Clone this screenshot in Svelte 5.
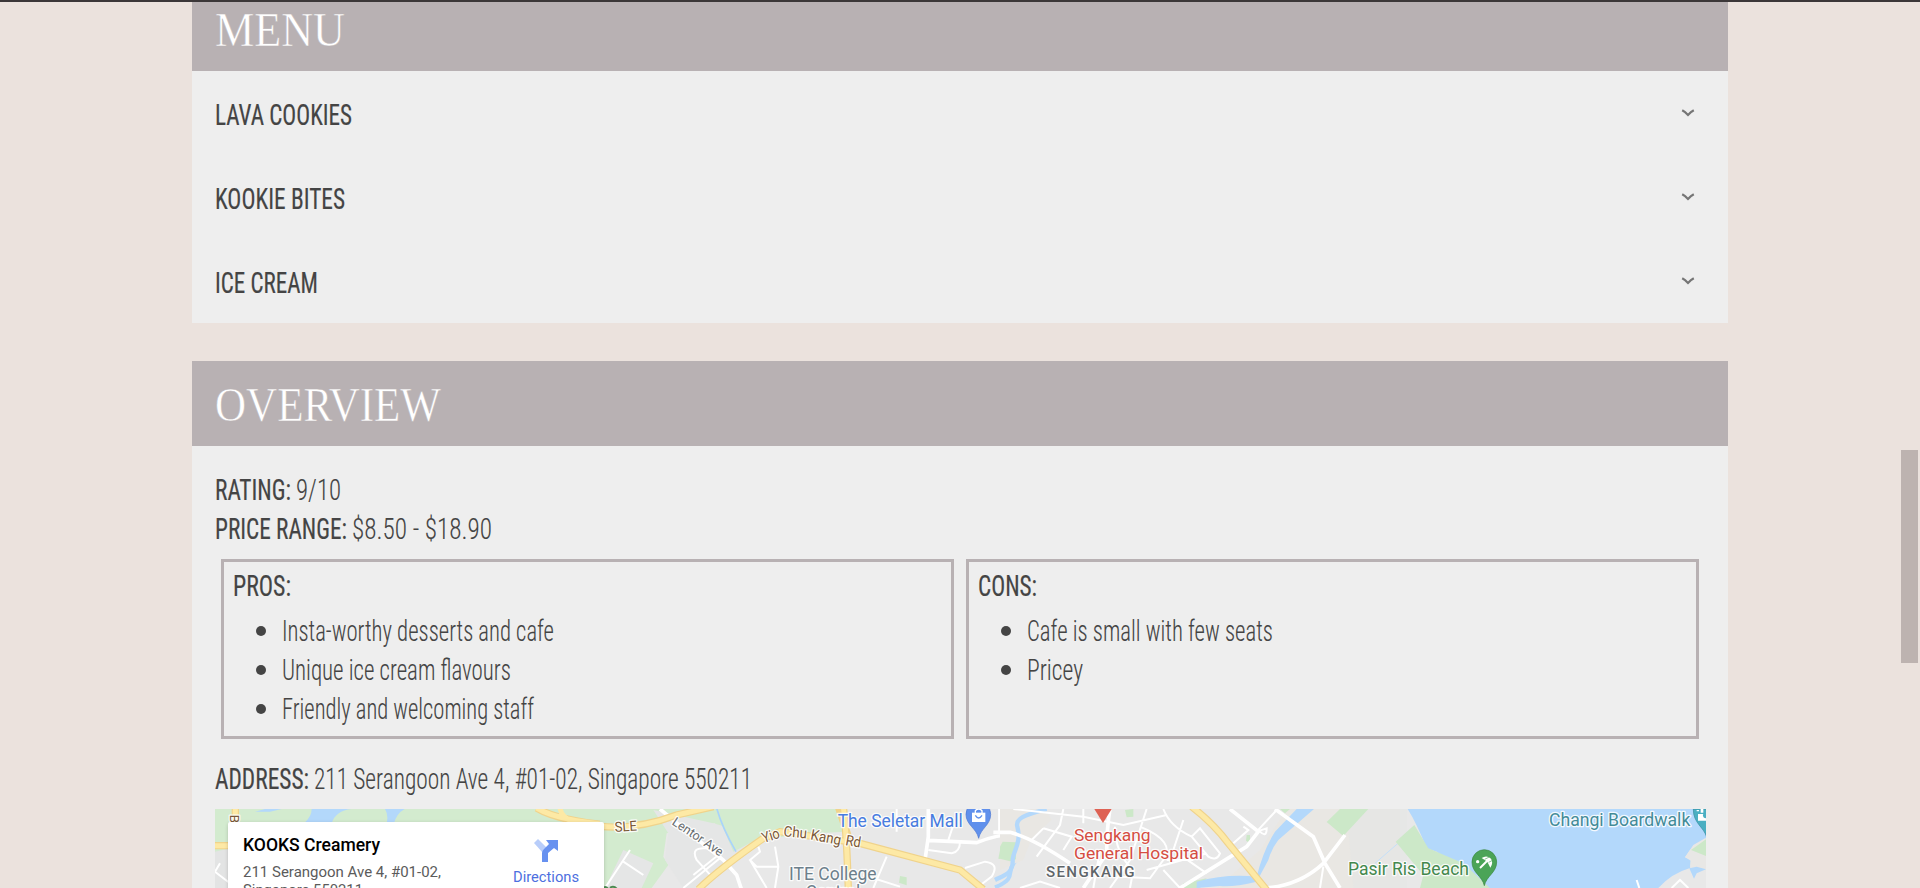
<script>
  const menu = [
    { name: 'LAVA COOKIES', width: 137 },
    { name: 'KOOKIE BITES', width: 130 },
    { name: 'ICE CREAM', width: 103 }
  ];
  const facts = [
    { label: 'RATING:', labelWidth: 76, value: '9/10', valueWidth: 45 },
    { label: 'PRICE RANGE:', labelWidth: 132, value: '$8.50 - $18.90', valueWidth: 140 }
  ];
  const boxes = [
    {
      title: 'PROS:',
      width: 58,
      items: [
        { text: 'Insta-worthy desserts and cafe', width: 272 },
        { text: 'Unique ice cream flavours', width: 229 },
        { text: 'Friendly and welcoming staff', width: 252 }
      ]
    },
    {
      title: 'CONS:',
      width: 59,
      items: [
        { text: 'Cafe is small with few seats', width: 246 },
        { text: 'Pricey', width: 56 }
      ]
    }
  ];
</script>

{#snippet line(text, width, kind)}
  <svg class="line {kind}" {width} height="39">
    <text x="0" y="28.5" textLength={width} lengthAdjust="spacingAndGlyphs">{text}</text>
  </svg>
{/snippet}

{#snippet heading(text, width)}
  <svg class="heading" {width} height="50">
    <text x="0" y="40" textLength={width} lengthAdjust="spacingAndGlyphs">{text}</text>
  </svg>
{/snippet}

<div class="page">
  <main>
    <section>
      <header class="first">{@render heading('MENU', 130)}</header>
      {#each menu as item}
        <div class="row">
          {@render line(item.name, item.width, 'strong')}
          <svg class="chevron" width="14" height="8" viewBox="0 0 14 8">
            <path d="M1.2 1.3Q4 2.8 7 5.9Q10 2.8 12.8 1.3" />
          </svg>
        </div>
      {/each}
    </section>

    <section class="overview">
      <header>{@render heading('OVERVIEW', 226)}</header>
      <div class="content">
        {#each facts as f}
          <div class="fact">
            {@render line(f.label, f.labelWidth, 'strong')}
            {@render line(f.value, f.valueWidth, 'light')}
          </div>
        {/each}
        <div class="boxes">
          {#each boxes as box}
            <div class="box">
              {@render line(box.title, box.width, 'strong')}
              <ul>
                {#each box.items as item}
                  <li><i></i>{@render line(item.text, item.width, 'light')}</li>
                {/each}
              </ul>
            </div>
          {/each}
        </div>
        <div class="fact">
          {@render line('ADDRESS:', 94, 'strong')}
          {@render line('211 Serangoon Ave 4, #01-02, Singapore 550211', 438, 'light')}
        </div>

        <div class="map">
          <svg width="1491" height="79" viewBox="215 809 1491 79">
            <rect x="215" y="809" width="1491" height="79" fill="#e8e8e8" />

            <g transform="translate(200 800) scale(.33333)">
              <path fill="#d3ebcf" d="M45 27H1300V280H45Z" />
              <path fill="#e3e4e4" d="M45 155L90 145V264H45ZM1215 264L1260 190V264Z" />
              <path fill="#b3d8fb" d="M165 35L195 27H245L210 35ZM335 27H400Q480 20 490 27Q410 20 395 70H312Q335 50 335 27ZM555 27H614Q590 40 582 70H560Q566 45 555 27Z" />
              <path class="edge" d="M106 27V66M45 137H90M1010 24Q1080 66 1260 78" />
              <path class="road" d="M106 27V66M45 137H90M1080 20Q1080 50 1120 66M1010 24Q1080 66 1280 78" />
              <path class="street" d="M45 215L90 250M60 190L45 215" />
              <text x="0" y="0" font-size="40" class="brown" transform="translate(90 44) rotate(90)">B</text>
            </g>

            <g transform="translate(600 800) scale(.33333)">
              <path fill="#d3ebcf" d="M0 27H735V90H690L500 118L480 110L400 155L345 70L200 100L190 170L205 195L155 264H0Z" />
              <path fill="#e5e6e6" d="M160 30L340 70L480 110L375 200L300 264H250L195 180L205 100ZM70 150L160 190L125 264H15Z" />
              <path fill="#d3ebcf" d="M345 27H720L735 95L490 108L400 155Z" />
              <path fill="#cce8c8" d="M1205 125L1260 127V160L1250 184L1195 176ZM900 228L920 232V256L897 248Z" />
              <path fill="none" stroke="#a9d3fb" stroke-width="5" d="M350 24Q365 80 408 155" />
              <path fill="none" stroke="#b3d8fb" stroke-width="12" d="M1280 75C1215 90 1290 145 1250 180C1210 215 1260 230 1185 262" />
              <path class="street" d="M15 264L90 150M70 185L130 225M250 264L365 170M280 225L355 165L320 145Q270 140 290 180L340 235M450 180L500 264M535 200L470 200L450 180L480 155L475 140M525 140L535 200L525 264M890 27V95M820 264L860 170M985 150L1055 160Q1080 155 1080 125M1045 120L1060 75M1095 204L1155 185Q1200 190 1175 230L1130 264M790 225L900 260" />
              <path class="street wide" d="M180 27L225 65L370 180L410 225L425 270M985 27V110L975 180M985 121L1130 128Q1210 95 1280 105M1200 27V95" />
              <path class="edge" d="M0 79Q110 90 230 45L340 20M295 268Q360 205 490 115L540 95L780 130L1080 210L1150 268M730 20Q740 100 745 268M715 20L745 110" />
              <path class="road" d="M0 79Q110 90 230 45L340 20M295 268Q360 205 490 115L540 95L780 130L1080 210L1150 268M730 20Q740 100 745 268" />
              <text x="45" y="96" font-size="42" textLength="67" lengthAdjust="spacingAndGlyphs" class="brown" transform="rotate(-4 45 96)">SLE</text>
              <text x="214" y="72" font-size="38" textLength="175" lengthAdjust="spacingAndGlyphs" transform="rotate(34 214 72)" fill="#666b6e">Lentor Ave</text>
              <g class="brown" font-size="44">
                <text x="491" y="129" textLength="54" lengthAdjust="spacingAndGlyphs" transform="rotate(-18 491 129)">Yio</text>
                <text x="550" y="109" textLength="70" lengthAdjust="spacingAndGlyphs" transform="rotate(5 550 109)">Chu</text>
                <text x="630" y="118" textLength="92" lengthAdjust="spacingAndGlyphs" transform="rotate(11 630 118)">Kang</text>
                <text x="735" y="135" textLength="46" lengthAdjust="spacingAndGlyphs" transform="rotate(10 735 135)">Rd</text>
              </g>
              <g fill="#6c7f8b" font-size="54">
                <text x="567" y="241" textLength="263" lengthAdjust="spacingAndGlyphs">ITE College</text>
                <text x="617" y="295" textLength="164" lengthAdjust="spacingAndGlyphs">Central</text>
              </g>
              <text x="713" y="82" font-size="54" textLength="375" lengthAdjust="spacingAndGlyphs" fill="#477ce0">The Seletar Mall</text>
              <path fill="#6090ec" stroke="#4876d2" stroke-width="2" d="M1136 115C1130 85 1098 75 1098 43A37 37 0 0 1 1172 43C1172 75 1142 85 1136 115Z" />
              <path fill="#fff" d="M1116 38H1156V66H1116Z" />
              <path fill="none" stroke="#fff" stroke-width="4" d="M1126 40V32Q1136 22 1146 32V40" />
              <path fill="none" stroke="#6090ec" stroke-width="4" d="M1126 46Q1136 62 1146 46" />
              <path fill="none" stroke="#4c8a50" stroke-width="6" d="M8 266Q15 256 24 266M32 270V262Q42 257 50 266" />
            </g>

            <g transform="translate(1000 800) scale(.33333)">
              <path fill="#e9e7e3" d="M0 27H135L155 60L95 115L70 180L0 210ZM650 264L780 150L860 27H1200V264Z" />
              <path fill="#e5e6e5" d="M1040 27H1220V264H1060Z" opacity=".6" />
              <path fill="#cce8c8" d="M8 125L48 127V178L30 184L0 176V140ZM1020 27H1105L1030 108L980 66ZM375 30L400 27V50L380 52ZM550 250L620 235L600 264H545ZM740 105H750V130L738 122ZM840 27H870L855 40Z" />
              <path fill="none" stroke="#b3d8fb" stroke-width="13" d="M140 27C75 45 45 55 52 80C65 130 40 150 38 180C40 220 15 225 -15 240" />
              <path fill="#b3d8fb" d="M890 27H942L835 120Q815 145 805 180L770 245Q700 262 660 258L590 264V245Q680 220 770 230Q790 150 825 95Z" />
              <path fill="none" stroke="#c5dff8" stroke-width="3" d="M1125 190L1240 90" />
              <path class="street" d="M40 27L250 50L370 75L500 45M190 27L180 75L110 170M130 85L215 110L190 150M250 27V70M440 27L390 180L330 264M490 27Q510 80 575 110L600 85L660 160Q650 185 625 170L575 110M420 80Q530 125 490 180L450 235L360 230M95 120L130 85M300 150L280 264M345 80Q345 160 400 210L390 264M440 210L620 160M490 210L540 264M550 60L520 150L620 220M700 130L745 90L730 80M770 95L830 30M780 95Q800 115 800 85L770 95M960 264L970 200M580 180L500 180M60 264L120 245L180 264" />
              <path class="street wide" d="M-20 97L30 97Q100 115 210 190M330 27Q320 85 320 160L250 264M690 27L775 95L740 140L540 264M825 27L940 110L975 190L1020 264M800 264Q900 255 970 190L1035 105" />
              <path class="edge" d="M575 20Q640 70 685 130L800 270" />
              <path class="road" d="M575 20Q640 70 685 130L800 270" />
              <path fill="#de6254" d="M283 27H335L309 69Z" />
              <g fill="#d54d42" font-size="52">
                <text x="222" y="124" textLength="230" lengthAdjust="spacingAndGlyphs">Sengkang</text>
                <text x="222" y="177" textLength="387" lengthAdjust="spacingAndGlyphs">General Hospital</text>
              </g>
              <text x="138" y="231" font-size="45" font-weight="500" letter-spacing="4" textLength="270" lengthAdjust="spacingAndGlyphs" fill="#5f6569">SENGKANG</text>
            </g>

            <g transform="translate(1320 800) scale(.33333)">
              <path fill="#b3d8fb" d="M263 27H1160V115L1110 150L1095 172L1118 185L1110 204Q1055 220 1015 264H500L350 155L320 145Q290 70 263 27Z" />
              <path fill="#cce8c8" d="M283 75L325 145L430 190L510 264H300L310 225L227 125Z" />
              <path fill="#e8e7e5" d="M1155 115L1120 135L1095 172L1112 175L1110 200L1158 212V115Z" />
              <path fill="#cce8c8" d="M1158 118V168L1113 150Z" />
              <path fill="#b3d8fb" d="M1108 205L1130 200L1158 208L1130 220L1122 236Z" />
              <path class="street" d="M950 240L958 264M1055 264L1080 240L1105 264" />
              <text x="84" y="224" font-size="54" textLength="363" lengthAdjust="spacingAndGlyphs" fill="#43884d">Pasir Ris Beach</text>
              <text x="687" y="78" font-size="54" textLength="424" lengthAdjust="spacingAndGlyphs" fill="#438b98">Changi Boardwalk</text>
              <path fill="#4ba457" stroke="#39863f" stroke-width="2" d="M493 257C487 228 456 218 456 186A37 37 0 0 1 530 186C530 218 499 228 493 257Z" />
              <g fill="none" stroke="#fff" stroke-width="6">
                <path d="M480 204L504 180" />
                <path fill="#fff" stroke="none" d="M485 174Q500 164 513 176Q521 189 511 203L502 185Z" />
                <circle cx="473" cy="185" r="5" fill="#fff" stroke="none" />
                <path stroke="#4ba457" stroke-width="2" d="M494 178L508 171M506 187L516 182" />
              </g>
              <path fill="#4aafc2" stroke="#33899b" stroke-width="2" d="M1120 27H1160V112C1153 82 1119 70 1120 27Z" />
              <path fill="#fff" d="M1134 42H1160V62H1134ZM1130 30H1137V34H1130ZM1142 27H1150V38H1142Z" />
              <circle cx="1158" cy="46" r="9" fill="#4aafc2" />
            </g>
          </svg>

          <div class="card">
            <div>
              <svg width="180" height="66">
                <g class="place">
                  <text x="0" y="29" font-size="17.8" font-weight="500" textLength="137" lengthAdjust="spacingAndGlyphs" fill="#000">KOOKS Creamery</text>
                  <text x="0" y="55" textLength="198" lengthAdjust="spacingAndGlyphs">211 Serangoon Ave 4, #01-02,</text>
                  <text x="0" y="73" textLength="120" lengthAdjust="spacingAndGlyphs">Singapore 550211</text>
                </g>
              </svg>
            </div>
            <div class="directions">
              <svg width="24" height="24" viewBox="0 0 24 24">
                <path d="M0 4L4 0L13 9L9 14Z" fill="#b8cdfa" />
                <path d="M8 23V14Q8 12 10 10L15 5L12 1H24V12L20 9L14 14V23Z" fill="#6791f0" />
              </svg>
              <span>Directions</span>
            </div>
          </div>
        </div>
      </div>
    </section>
  </main>
  <div class="scrollbar"></div>
</div>

<style>
  :global(body) {
    background: #ebe2dd;
    overflow: hidden;
  }
  .page {
    box-sizing: border-box;
    height: 888px;
    overflow: hidden;
    position: relative;
    border-top: 2px solid #3b3738;
    background: #ebe2dd;
    font-family: Roboto, sans-serif;
  }
  svg {
    display: block;
    flex: none;
  }
  main {
    width: 1536px;
    margin: 0 auto;
  }
  section {
    background: #eee;
  }
  header {
    box-sizing: border-box;
    height: 85px;
    padding: 20px 0 0 23px;
    background: #b8b1b3;
  }
  header.first {
    height: 69px;
    padding-top: 4px;
  }
  .heading {
    overflow: visible;
  }
  .heading text {
    font-family: 'Liberation Serif', serif;
    font-size: 49px;
    fill: #fff;
    stroke: #b8b1b3;
    stroke-width: 0.5px;
  }
  .line {
    overflow: visible;
    font-stretch: 75%;
    font-size: 30px;
    fill: #444;
  }
  .strong {
    font-weight: 400;
    stroke: #444;
    stroke-width: 0.2px;
  }
  .light {
    font-weight: 300;
    stroke: #444;
    stroke-width: 0.1px;
  }
  .row {
    box-sizing: border-box;
    height: 84px;
    padding: 25px 33px 0 23px;
    display: flex;
    justify-content: space-between;
  }
  .chevron {
    margin-top: 13px;
    fill: none;
    stroke: #757575;
    stroke-width: 2.2;
  }
  .overview {
    margin-top: 38px;
  }
  .content {
    padding: 25px 22px 0 23px;
  }
  .fact {
    display: flex;
    gap: 5px;
  }
  .boxes {
    display: flex;
    gap: 12px;
    margin: 10px 7px 21px 6px;
  }
  .box {
    box-sizing: border-box;
    width: 733px;
    height: 180px;
    border: 3px solid #b8b1b3;
    padding: 5px 8px 5px 9px;
  }
  ul {
    list-style: none;
    margin: 6px 0 0;
    padding: 0 0 0 23px;
  }
  li {
    display: flex;
    gap: 16px;
  }
  li i {
    width: 10px;
    height: 10px;
    margin-top: 14px;
    border-radius: 50%;
    background: #444;
  }
  .map {
    position: relative;
    height: 79px;
    margin-top: 10px;
  }
  .map > svg text {
    stroke: #fff;
    stroke-opacity: 0.85;
    stroke-width: 8px;
    stroke-linejoin: round;
    paint-order: stroke;
  }
  .brown {
    fill: #795737;
  }
  .edge,
  .road,
  .street {
    fill: none;
  }
  .edge {
    stroke: #f0d38b;
    stroke-width: 22;
  }
  .road {
    stroke: #fde9a5;
    stroke-width: 15;
  }
  .street {
    stroke: #fff;
    stroke-width: 6;
  }
  .wide {
    stroke-width: 11;
  }
  .card {
    box-sizing: border-box;
    position: absolute;
    left: 13px;
    top: 13px;
    width: 376px;
    height: 90px;
    padding: 0 25px 0 15px;
    display: flex;
    justify-content: space-between;
    background: #fff;
    border-radius: 2px;
    box-shadow: 0 1px 4px -1px rgba(0, 0, 0, 0.3);
  }
  .card svg {
    overflow: visible;
  }
  .place {
    font-size: 14.9px;
    fill: #5b5b5b;
  }
  .directions {
    padding-top: 17px;
    display: flex;
    flex-direction: column;
    align-items: center;
    gap: 6px;
    color: #4d6fe0;
    font-size: 14.7px;
    line-height: 16px;
  }
  .scrollbar {
    position: absolute;
    right: 2px;
    top: 448px;
    width: 17px;
    height: 213px;
    background: #bdb3b0;
  }
</style>
